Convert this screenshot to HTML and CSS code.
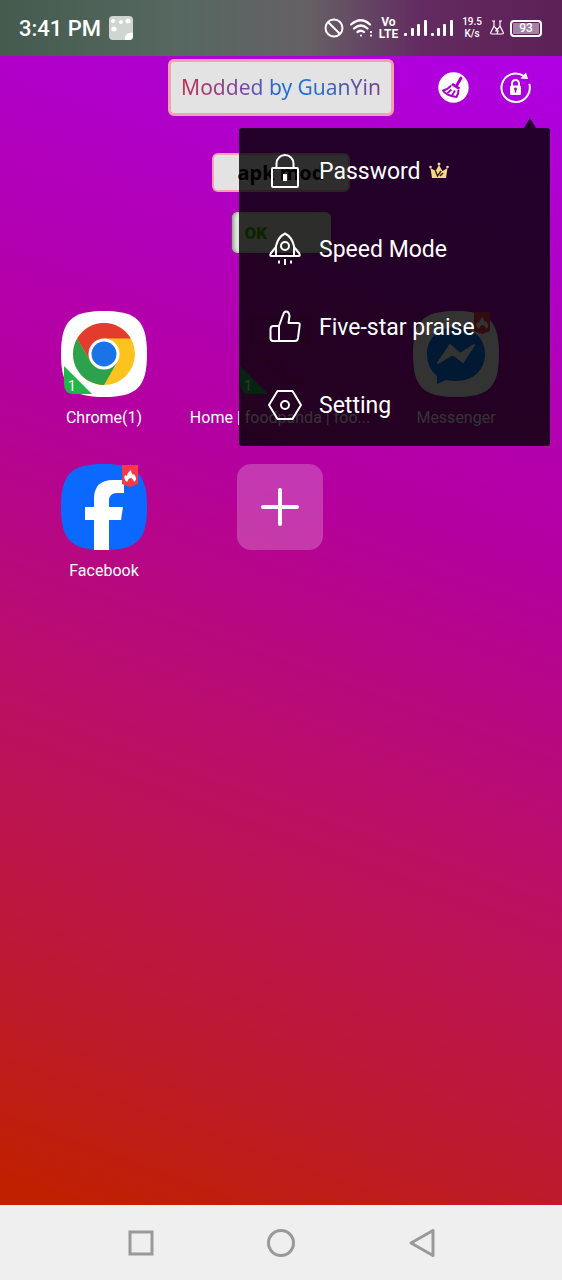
FILE: index.html
```html
<!DOCTYPE html>
<html lang="en">
<head>
  <meta charset="UTF-8">
  <meta name="viewport" content="width=device-width, initial-scale=1.0">
  <title>App Space</title>
  <link rel="stylesheet" href="styles.css">
</head>
<body>
  <!-- Status bar -->
  <div class="status-bar">
    <div class="status-left">
      <span class="clock">3:41 PM</span>
      <svg width="24" height="24" viewBox="0 0 24 24">
        <rect width="24" height="24" rx="4" fill="#cfd6d1"/>
        <g fill="#fff"><circle cx="4" cy="5" r="2"/><circle cx="12" cy="6" r="2"/><circle cx="19" cy="5" r="2.5"/><circle cx="5" cy="13" r="2.5"/><path d="M16 24c-1-5 3-8 8-7v3a4 4 0 0 1-4 4z"/></g>
      </svg>
    </div>
    <div class="status-right">
      <svg width="20" height="20" viewBox="0 0 20 20" fill="none" stroke="#fff" stroke-width="2"><circle cx="10" cy="10" r="8.500"/><path d="M4 4l12 12"/></svg>
      <svg width="23" height="20" viewBox="0 0 23 20" fill="none" stroke="#fff" stroke-width="2.200" stroke-linecap="round"><path d="M1 6.500Q11 -2 20 6.500M4 10.500Q11 4.500 17.500 10.500M7.500 14Q11 11.500 14 14"/><path d="M11 17.500v.1M21 14v.1M21 17.500v.1"/></svg>
      <span class="volte">Vo<br>LTE</span>
      <svg width="50" height="18" viewBox="0 0 50 18" fill="#fff"><rect x="0" y="14" width="3" height="3" rx="1"/><rect x="7" y="9" width="3" height="8" rx="1"/><rect x="13" y="5" width="3" height="12" rx="1"/><rect x="20" y="1" width="3" height="16" rx="1"/><rect x="27" y="14" width="3" height="3" rx="1"/><rect x="33" y="9" width="3" height="8" rx="1"/><rect x="39" y="5" width="3" height="12" rx="1"/><rect x="46" y="1" width="3" height="16" rx="1"/></svg>
      <span class="speed">19.5<br>K/s</span>
      <svg width="14" height="16" viewBox="0 0 14 16" fill="none" stroke="#fff" stroke-width="1.200"><path d="M2 1h3M9 1h3M4 1v5L1 12q-1 2 1 2h10q2 0 1-2L10 6V1M4 6l3 4 3-4M7 8l-1 3h2l-1 3"/></svg>
      <span class="battery">93</span>
    </div>
  </div>

  <main class="home">
    <header class="top-bar">
      <h1 class="mod-badge"><span>Modded by GuanYin</span></h1>
      <div class="actions">
        <button type="button" aria-label="Clean">
          <svg width="31" height="31" viewBox="0 0 31 31">
            <circle cx="15.500" cy="15.500" r="15.200" fill="#fff"/>
            <path d="M23 6l-4 7" fill="none" stroke="#a900c5" stroke-width="3" stroke-linecap="round"/>
            <path d="M15 11l7 4.500-1 2.500-8-5z" fill="#a900c5"/>
            <path d="M13 13.500q-3 4-8 5 3 5 13.500 6.500 2-3 2-7" fill="none" stroke="#a900c5" stroke-width="2" stroke-linejoin="round"/>
            <path d="M9.500 21l4-3.500M14 23.500l3-5" fill="none" stroke="#a900c5" stroke-width="1.800"/>
          </svg>
        </button>
        <button type="button" aria-label="Lock">
          <svg width="31" height="31" viewBox="0 0 31 31" fill="none" stroke="#fff">
            <path d="M23.500 3.900A14.200 14.200 0 1 0 29.300 11.800" stroke-width="2"/>
            <path d="M20.500 6.500l7.500.5-2-6.500z" fill="#fff" stroke="none"/>
            <path d="M12 14v-2.500a3.500 3.500 0 0 1 7 0V14" stroke-width="2"/>
            <rect x="10" y="13.500" width="11" height="9.500" rx="1.500" fill="#fff" stroke="none"/>
            <circle cx="15.500" cy="17" r="1.400" fill="#a000b4" stroke="none"/><path d="M15.500 17v3.500" stroke="#a000b4" stroke-width="1.500"/>
          </svg>
        </button>
      </div>

      <!-- Drop-down menu over the page -->
      <div class="menu">
        <button type="button" class="menu-item">
          <svg width="34" height="34" viewBox="0 0 34 34" fill="none" stroke="#fff" stroke-width="2"><rect x="4" y="14" width="26" height="19" rx="1"/><path d="M8.500 14V9.500a8.500 8.500 0 0 1 17 0V14"/><path d="M17 20v7" stroke-width="4"/></svg>
          <span>Password</span>
          <svg class="crown" width="20" height="18" viewBox="0 0 20 18"><path d="M3 16L1.500 6l5 3L10 3l3.500 6 5-3L17 16z" fill="#f4d68c"/><g fill="#f4d68c"><circle cx="10" cy="2" r="1.500"/><circle cx="1.500" cy="5" r="1.300"/><circle cx="18.500" cy="5" r="1.300"/></g><path d="M6.500 9l2 5 3.500-5M11 14l3-3" fill="none" stroke="#3c2410" stroke-width="1.500"/></svg>
        </button>
        <button type="button" class="menu-item">
          <svg width="34" height="34" viewBox="0 0 34 34" fill="none" stroke="#fff" stroke-width="2" stroke-linejoin="round"><path d="M8 24V14Q10 5 17 1.500 24 5 26 14v10z"/><path d="M8 15l-5 6q-1.500 3 0 3h5M26 15l5 6q1.500 3 0 3h-5"/><circle cx="17" cy="14" r="4"/><path d="M11 28.500v3M17 27v6M23 28.500v3"/></svg>
          <span>Speed Mode</span>
        </button>
        <button type="button" class="menu-item">
          <svg width="34" height="34" viewBox="0 0 34 34" fill="none" stroke="#fff" stroke-width="2" stroke-linejoin="round"><path d="M11 31V16l4-11q1-3.500 3-3.500 3 0 3.500 4.500l-1 7H30q2 0 1.700 2L30 28q-.5 3-3 3H5q-2.500 0-2.500-3v-9q0-3 3-3H11"/></svg>
          <span>Five-star praise</span>
        </button>
        <button type="button" class="menu-item">
          <svg width="34" height="34" viewBox="0 0 34 34" fill="none" stroke="#fff" stroke-width="2" stroke-linejoin="round"><path d="M9.500 3h15L33 17l-8.500 14h-15L1 17z"/><circle cx="17" cy="17" r="4"/></svg>
          <span>Setting</span>
        </button>
      </div>
    </header>

    <div class="tags">
      <span class="tag-apk">apk mod</span>
      <button type="button" class="tag-ok">OK</button>
    </div>

    <!-- App icons -->
    <div class="apps">
      <a href="#" class="app">
        <svg width="86" height="86" viewBox="0 0 86 86">
          <path d="M43 0C76 0 86 10 86 43S76 86 43 86 0 76 0 43 10 0 43 0z" fill="#fff"/>
          <circle cx="43" cy="43" r="31" fill="#fcc31e"/>
          <path d="M16.150 27.500A31 31 0 0 1 69.850 27.500H43L29.600 50.800z" fill="#e33b2e"/>
          <path d="M16.150 27.500A31 31 0 0 0 43 74L56.400 50.800 43 43 29.600 50.800z" fill="#2da14c"/>
          <circle cx="43" cy="43" r="15.500" fill="#fff"/><circle cx="43" cy="43" r="12.500" fill="#1b73e8"/>
          <path d="M3 55l28 28H13Q3 83 3 73z" fill="#20b64c"/>
          <text x="7" y="80" class="count">1</text>
        </svg>
        <span>Chrome(1)</span>
      </a>
      <a href="#" class="app">
        <svg width="86" height="86" viewBox="0 0 86 86">
          <path d="M15 8h56v22H15zM18 48h14v22M48 45v25h20M36 58h12" fill="none" stroke="#b5003e" stroke-width="4" opacity=".3"/>
          <path d="M3 55l28 28H13Q3 83 3 73z" fill="#20b64c"/>
          <text x="7" y="80" class="count">1</text>
        </svg>
        <span>Home | foodpanda | foo...</span>
      </a>
      <a href="#" class="app">
        <svg width="86" height="86" viewBox="0 0 86 86">
          <path d="M43 0C76 0 86 10 86 43S76 86 43 86 0 76 0 43 10 0 43 0z" fill="#fff"/>
          <path d="M43 16c17 0 29 11 29 27S60 70 43 70q-6 0-10-1l-9 4v-8q-10-8-10-22c0-16 12-27 29-27z" fill="#0a7cff"/>
          <path d="M25 52l12-18 10 9 14-9-11 17-10-8z" fill="#fff" stroke="#fff" stroke-width="2" stroke-linejoin="round"/>
          <path d="M61 1h16v19l-8 3-8-3z" fill="#f5384a"/><path d="M66 18q-4-3-2-7l2 1q0-3 4-6 0 3 2 5l1-1q4 5 0 8-1-4-4-4-2 1-3 4z" fill="#fff"/>
        </svg>
        <span>Messenger</span>
      </a>
      <a href="#" class="app">
        <svg width="86" height="86" viewBox="0 0 86 86">
          <path d="M43 0C76 0 86 10 86 43S76 86 43 86 0 76 0 43 10 0 43 0z" fill="#0b69ff"/>
          <path d="M33 86V56h-9V43h9V35q0-19 19-19h11v13h-7q-8 0-8 8v6h14l-2 13H48v30z" fill="#fff"/>
          <path d="M61 1h16v19l-8 3-8-3z" fill="#f5384a"/><path d="M66 18q-4-3-2-7l2 1q0-3 4-6 0 3 2 5l1-1q4 5 0 8-1-4-4-4-2 1-3 4z" fill="#fff"/>
        </svg>
        <span>Facebook</span>
      </a>
      <button type="button" class="add-app" aria-label="Add app">
        <svg width="40" height="40" viewBox="0 0 40 40" stroke="#fff" stroke-width="4" stroke-linecap="round"><path d="M20 3v34M3 20h34"/></svg>
      </button>
    </div>
  </main>

  <!-- System navigation -->
  <nav class="nav-bar">
    <button type="button" aria-label="Recent"><svg width="28" height="30" viewBox="0 0 28 30"><rect x="3" y="4" width="22" height="22"/></svg></button>
    <button type="button" aria-label="Home"><svg width="28" height="30" viewBox="0 0 28 30"><circle cx="14" cy="15" r="12.500"/></svg></button>
    <button type="button" aria-label="Back"><svg width="28" height="30" viewBox="0 0 28 30"><path d="M25 2.500v25L3 15z" stroke-linejoin="round"/></svg></button>
  </nav>
</body>
</html>
```

FILE: styles.css
```css
* {
    margin: 0;
    padding: 0;
    box-sizing: border-box;
}

body {
    min-height: 100vh;
    display: flex;
    flex-direction: column;
    font-family: Roboto, "Liberation Sans", sans-serif;
    color: white;
}

svg {
    display: block;
    flex-shrink: 0;
}

button {
    background: none;
    border: none;
    color: inherit;
    font-family: inherit;
    cursor: pointer;
}

/* Status bar */
.status-bar {
    display: flex;
    justify-content: space-between;
    align-items: center;
    height: 56px;
    padding: 0 20px 0 19px;
    background: linear-gradient(90deg, #455b4e, #566861 32%, #666065 55%, #632b61 75%, #5c2056);
}

.status-left,
.status-right {
    display: flex;
    align-items: center;
}

.status-left {
    gap: 8px;
}

.status-right {
    gap: 6px;
}

.clock {
    font-size: 22px;
    font-weight: 500;
}

.volte {
    font-size: 12px;
    font-weight: 700;
    line-height: 12px;
    text-align: center;
}

.speed {
    font-size: 10px;
    font-weight: 500;
    line-height: 12px;
    text-align: center;
    margin: 0 2px;
}

.battery {
    width: 32px;
    height: 17px;
    border: 2px solid white;
    border-radius: 4px;
    background-color: #a382a5;
    font-size: 12px;
    font-weight: 500;
    line-height: 13px;
    text-align: center;
    box-shadow: inset 0 0 0 1px #5c2056;
}

/* Home screen */
.home {
    flex: 1;
    background: linear-gradient(200deg, #ae00e4 0%, #b4009f 38%, #bb1062 63%, #bd1a30 83%, #c02000 98%);
}

.top-bar {
    position: relative;
    display: grid;
    grid-template-columns: 1fr auto 1fr;
    align-items: center;
    padding-top: 3px;
}

.mod-badge {
    grid-column: 2;
    padding: 0 10px;
    border: 3px solid #f3a0b4;
    border-radius: 6px;
    background-color: #e3e3e4;
    font-family: "Noto Sans", sans-serif;
    font-size: 21px;
    font-weight: 400;
    line-height: 51px;
}

.mod-badge span {
    display: block;
    background: linear-gradient(90deg, #c52e55, #6c4fae 35%, #1c6bd8 50%, #2570d2 65%, #7b3f91);
    -webkit-background-clip: text;
    background-clip: text;
    color: transparent;
}

.actions {
    display: flex;
    justify-content: flex-end;
    gap: 31px;
    padding-right: 31px;
}

/* Menu */
.menu {
    position: absolute;
    top: 72px;
    right: 12px;
    width: 311px;
    padding: 4px 0 2px;
    border-radius: 3px;
    background-color: rgba(0, 0, 0, 0.8);
    z-index: 10;
}

.menu::before {
    content: "";
    position: absolute;
    right: 14px;
    bottom: 100%;
    border: 6px solid transparent;
    border-top-width: 0;
    border-bottom: 10px solid #23002e;
}

.menu-item {
    display: flex;
    align-items: center;
    width: 100%;
    height: 78px;
    padding-left: 29px;
    font-size: 23px;
}

.menu-item span {
    margin-left: 17px;
}

.crown {
    margin-left: 8px;
}

/* Tags */
.tags {
    display: flex;
    flex-direction: column;
    align-items: center;
    gap: 20px;
    margin-top: 37px;
}

.tag-apk {
    width: 138px;
    border: 2px solid #f3a0b4;
    border-radius: 6px;
    background-color: #e3e3e4;
    color: black;
    font-family: "Noto Sans", sans-serif;
    font-size: 20px;
    font-weight: 700;
    line-height: 35px;
    text-align: center;
}

.tag-ok {
    width: 99px;
    height: 41px;
    padding-left: 13px;
    border-radius: 6px;
    background-color: #dfe5dc;
    box-shadow: inset 2px 0 3px #9aa096, 0 0 3px #79506f;
    color: #3fae00;
    font-size: 17px;
    font-weight: 900;
    text-align: left;
}

/* Apps */
.apps {
    display: grid;
    grid-template-columns: repeat(3, 1fr);
    row-gap: 36px;
    padding: 58px 18px 0 16px;
}

.app {
    display: flex;
    flex-direction: column;
    align-items: center;
    gap: 11px;
    min-width: 0;
    color: white;
    font-size: 16px;
    line-height: 20px;
    text-decoration: none;
    white-space: nowrap;
}

.count {
    fill: white;
    font-size: 14px;
}

.add-app {
    display: flex;
    align-items: center;
    justify-content: center;
    justify-self: center;
    width: 86px;
    height: 86px;
    border-radius: 14px;
    background-color: rgba(255, 255, 255, 0.22);
}

/* Navigation */
.nav-bar {
    display: grid;
    grid-template-columns: repeat(3, 25%);
    justify-content: center;
    align-items: center;
    justify-items: center;
    height: 75px;
    background-color: #efefef;
}

.nav-bar svg {
    fill: none;
    stroke: #999;
    stroke-width: 3px;
}
```
